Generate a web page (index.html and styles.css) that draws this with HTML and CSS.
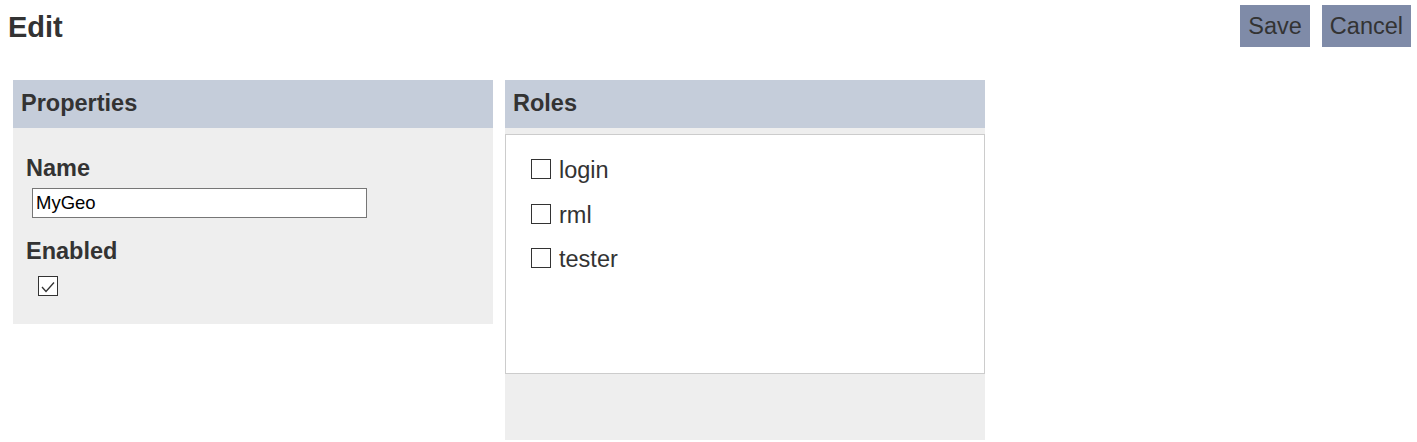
FILE: index.html
```html
<!DOCTYPE html>
<html>
<head>
<meta charset="utf-8">
<link rel="stylesheet" href="styles.css">
</head>
<body>
<div class="topbar">
  <h1 class="title">Edit</h1>
  <div class="actions">
    <button class="btn">Save</button>
    <button class="btn">Cancel</button>
  </div>
</div>
<div class="panels">
  <section class="panel props">
    <div class="panel-head">Properties</div>
    <div class="props-body">
      <div class="field-label">Name</div>
      <input class="text-input" type="text" value="MyGeo">
      <div class="field-label enabled-label">Enabled</div>
      <span class="box box-checked">
        <svg width="20" height="20" viewBox="0 0 20 20"><polyline points="4,11 8,15.5 16,6.5" fill="none" stroke="#333" stroke-width="1.3"/></svg>
      </span>
    </div>
  </section>
  <section class="panel roles">
    <div class="panel-head">Roles</div>
    <div class="roles-body">
      <div class="roles-list">
        <label class="role"><span class="box"></span><span class="role-name">login</span></label>
        <label class="role"><span class="box"></span><span class="role-name">rml</span></label>
        <label class="role"><span class="box"></span><span class="role-name">tester</span></label>
      </div>
    </div>
  </section>
</div>
</body>
</html>
```
FILE: styles.css
```css
html, body {
  margin: 0;
  padding: 0;
  background: #ffffff;
}
body {
  font-family: "Liberation Sans", Arial, sans-serif;
  color: #333333;
}
.topbar {
  display: flex;
  justify-content: space-between;
  align-items: flex-start;
  padding: 5px 6px 0 8px;
}
.title {
  margin: 6px 0 0 0;
  font-size: 29px;
  font-weight: bold;
  line-height: 33px;
  color: #333333;
}
.actions {
  display: flex;
  gap: 12px;
}
.btn {
  height: 42px;
  padding: 0 8px;
  margin: 0;
  border: none;
  background: #7f8ba8;
  color: #333333;
  font-family: "Liberation Sans", Arial, sans-serif;
  font-size: 23.5px;
  line-height: 42px;
}
.panels {
  display: flex;
  align-items: flex-start;
  gap: 12px;
  padding-left: 13px;
  margin-top: 33px;
}
.panel {
  width: 480px;
  background: #eeeeee;
}
.panel-head {
  height: 48px;
  box-sizing: border-box;
  padding: 1px 8px 0 8px;
  line-height: 44px;
  background: #c5cdda;
  font-size: 23.5px;
  font-weight: bold;
  color: #333333;
}
.props-body {
  padding: 27px 13px 28px 13px;
  display: flex;
  flex-direction: column;
  align-items: flex-start;
}
.field-label {
  font-size: 23.5px;
  font-weight: bold;
  line-height: 27px;
}
.text-input {
  margin: 6px 0 0 6px;
  width: 335px;
  height: 30px;
  box-sizing: border-box;
  border: 1px solid #767676;
  padding: 0 3px;
  background: #ffffff;
  font-family: "Liberation Sans", Arial, sans-serif;
  font-size: 18.5px;
  color: #000000;
  outline: none;
}
.enabled-label {
  margin-top: 20px;
}
.box {
  display: block;
  width: 20px;
  height: 20px;
  box-sizing: border-box;
  border: 1px solid #333333;
  background: #ffffff;
  flex: none;
}
.box svg {
  display: block;
  margin: -1px 0 0 -1px;
}
.box-checked {
  margin: 11px 0 0 12px;
}
.roles-body {
  padding: 6px 0 66px 0;
}
.roles-list {
  height: 240px;
  box-sizing: border-box;
  border: 1px solid #cccccc;
  background: #ffffff;
  padding: 24px 0 0 25px;
}
.role {
  display: flex;
  align-items: flex-start;
  gap: 8px;
  height: 44.5px;
}
.role-name {
  font-size: 23.5px;
  line-height: 27px;
  margin-top: -2px;
  color: #333333;
}
```
